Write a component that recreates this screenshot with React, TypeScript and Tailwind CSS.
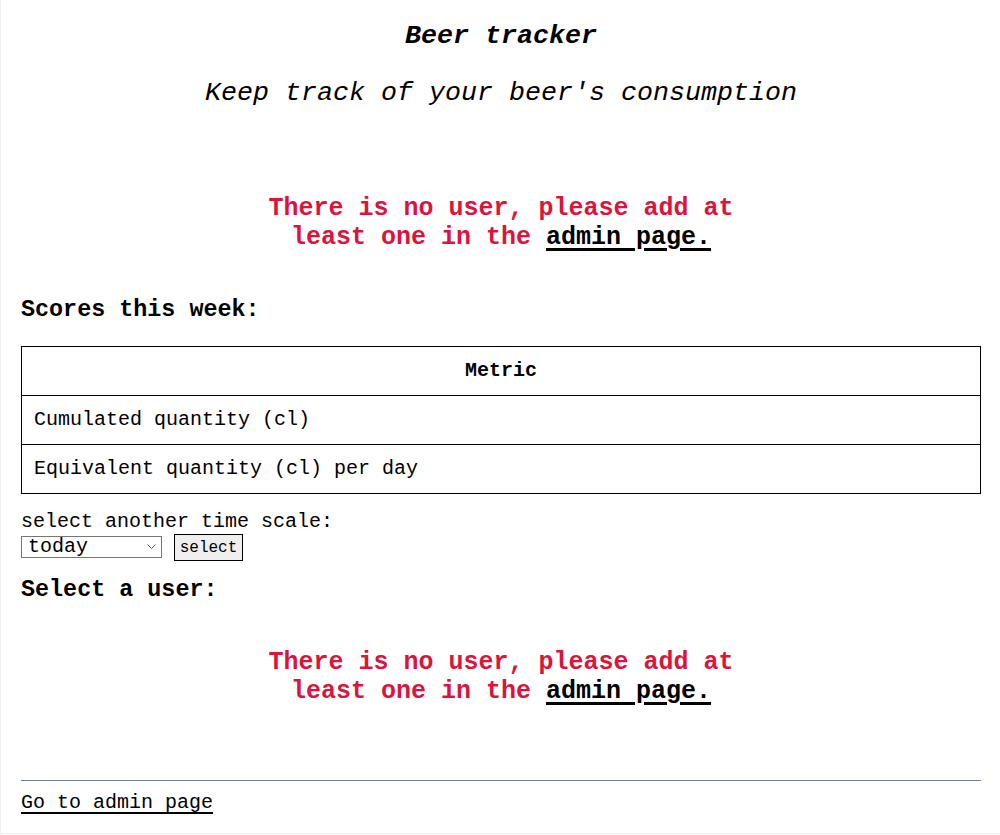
import React from "react";

const mono = { fontFamily: '"Liberation Mono", "Courier New", monospace' };

function NoUser() {
  return (
    <p className="mx-auto max-w-[480px] text-center text-[25px] font-bold leading-[29px] text-[#dc143c]">
      There is no user, please add at least one in the{" "}
      <a
        href="#"
        className="text-black underline decoration-[3px] underline-offset-[4px]"
      >
        admin page.
      </a>
    </p>
  );
}

export default function App() {
  return (
    <div
      style={mono}
      className="h-[834px] w-full border-b border-l border-[#eeeeee] bg-white pl-[20px] pr-[19px] text-[20px] text-black"
    >
      <h1 className="pt-[20px] text-center text-[26.67px] font-bold italic leading-[32px]">
        Beer tracker
      </h1>
      <h2 className="mt-[25px] text-center text-[26.67px] italic leading-[32px]">
        Keep track of your beer's consumption
      </h2>

      <div className="mt-[85px]">
        <NoUser />
      </div>

      <h3 className="mt-[44px] text-[23.4px] font-bold leading-[28px]">
        Scores this week:
      </h3>

      <table className="mt-[22px] w-full border-collapse border border-black">
        <thead>
          <tr className="h-[49px]">
            <th className="border border-black px-3 text-center text-[20px] font-bold">
              Metric
            </th>
          </tr>
        </thead>
        <tbody>
          <tr className="h-[49px]">
            <td className="border border-black px-3 text-left">
              Cumulated quantity (cl)
            </td>
          </tr>
          <tr className="h-[49px]">
            <td className="border border-black px-3 text-left">
              Equivalent quantity (cl) per day
            </td>
          </tr>
        </tbody>
      </table>

      <div className="mt-[16px] leading-[24px]">select another time scale:</div>
      <div className="flex h-[27px] items-center gap-[12px]">
        <div className="relative -mt-[1px] h-[22px] w-[141px]">
          <select
            style={mono}
            className="block h-[22px] w-[141px] appearance-none border border-[#767676] bg-white py-0 pl-[6px] pr-0 text-[20px] leading-[20px] text-black outline-none"
            defaultValue="today"
          >
            <option value="today">today</option>
            <option value="week">this week</option>
            <option value="month">this month</option>
          </select>
          <svg
            className="pointer-events-none absolute right-[6px] top-[8px]"
            width="9"
            height="6"
            viewBox="0 0 9 6"
          >
            <path d="M0.5 0.5 L4.5 4.5 L8.5 0.5" fill="none" stroke="#555" strokeWidth="1" />
          </svg>
        </div>
        <button
          style={mono}
          className="h-[27px] w-[69px] border border-black bg-[#efefef] p-0 text-[16px] leading-[18px] text-black"
        >
          select
        </button>
      </div>

      <h3 className="mt-[15px] text-[23.4px] font-bold leading-[28px]">
        Select a user:
      </h3>

      <div className="mt-[44px]">
        <NoUser />
      </div>

      <hr className="mt-[74px] border-0 border-t border-[#708090]" />

      <div className="mt-[10px] leading-[24px]">
        <a href="#" className="text-black underline underline-offset-[4px]">
          Go to admin page
        </a>
      </div>
    </div>
  );
}
